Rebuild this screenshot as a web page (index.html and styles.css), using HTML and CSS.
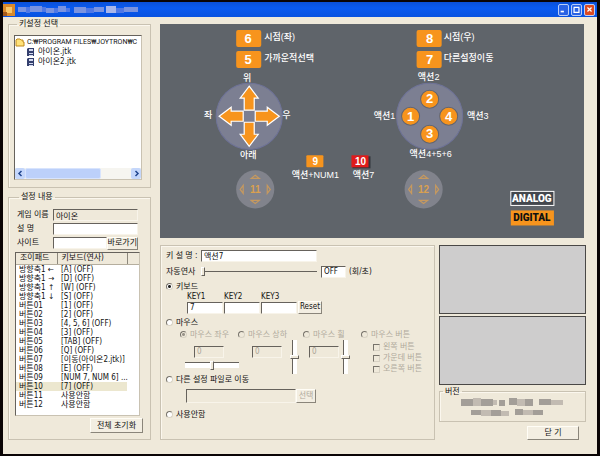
FILE: index.html
```
<!DOCTYPE html>
<html lang="ko">
  <head>
    <meta charset="UTF-8" />
    <meta name="viewport" content="width=device-width, initial-scale=1.0" />
    <title>키 설정</title>
    <link rel="stylesheet" href="styles.css">
  </head>
  <body>
    <div class="window">
      <header class="titlebar">
        <svg class="app-icon" width="12" height="12" viewBox="0 0 12 12">
          <rect width="12" height="12" fill="#d98a2b" />
          <rect x="3" y="3" width="6" height="6" fill="#f6c66a" />
          <rect y="8" width="4" height="4" fill="#a55a1c" />
        </svg>
        <svg class="title-mosaic" width="124" height="9" viewBox="0 0 124 9">
          <g fill="#7a93e0">
            <rect x="0" y="2" width="8" height="5" />
            <rect x="12" y="1" width="12" height="6" />
            <rect x="28" y="3" width="8" height="5" />
            <rect x="40" y="1" width="8" height="6" />
            <rect x="56" y="2" width="12" height="6" />
            <rect x="76" y="2" width="10" height="5" />
            <rect x="106" y="2" width="14" height="5" />
          </g>
          <g fill="#4f78e6">
            <rect x="8" y="2" width="4" height="6" />
            <rect x="24" y="2" width="4" height="5" />
            <rect x="36" y="3" width="4" height="5" />
            <rect x="48" y="3" width="4" height="4" />
            <rect x="68" y="3" width="8" height="5" />
            <rect x="98" y="3" width="8" height="5" />
          </g>
          <rect x="88" y="1" width="10" height="7" fill="#a9b6ea" />
        </svg>
        <div class="title-buttons">
          <button type="button" aria-label="최소화"><svg width="11" height="11" viewBox="0 0 11 11"><path d="M2 8h4" stroke="#fff" stroke-width="2" /></svg></button>
          <button type="button" aria-label="최대화"><svg width="11" height="11" viewBox="0 0 11 11"><path d="M2 3h7M2.500 3v6h6v-6" fill="none" stroke="#fff" stroke-width="1.500" /></svg></button>
          <button type="button" class="close" aria-label="닫기"><svg width="11" height="11" viewBox="0 0 11 11"><path d="M3 3l5 5M8 3l-5 5" stroke="#fff" stroke-width="1.500" /></svg></button>
        </div>
      </header>

      <main class="content">
        <div class="left">
          <fieldset class="group files">
            <legend>키설정 선택</legend>
            <div class="tree">
              <ul>
                <li class="folder">
                  <svg width="10" height="9" viewBox="0 0 10 9"><path d="M1 8V2l1-1h3l1 1h2v2h1v4z" fill="#ffe27a" stroke="#c08a1c" /></svg>
                  C:₩PROGRAM FILES₩JOYTRON₩C
                </li>
                <li class="file">
                  <svg width="9" height="9" viewBox="0 0 9 9"><path d="M1 1l1-1h6v8H1z" fill="#34406e" /><path d="M3 1h4v2H3zM3 5h4v1H3zM3 7h4v1H3z" fill="#d5daf0" /></svg>
                  아이온.jtk
                </li>
                <li class="file">
                  <svg width="9" height="9" viewBox="0 0 9 9"><path d="M1 1l1-1h6v8H1z" fill="#34406e" /><path d="M3 1h4v2H3zM3 5h4v1H3zM3 7h4v1H3z" fill="#d5daf0" /></svg>
                  아이온2.jtk
                </li>
              </ul>
              <div class="scrollbar">
                <button type="button" aria-label="왼쪽"><svg width="9" height="9" viewBox="0 0 9 9"><path d="M5.500 2L3 4.500L5.500 7" fill="none" stroke="#21468f" stroke-width="1.500" /></svg></button>
                <div class="thumb"></div>
                <button type="button" aria-label="오른쪽"><svg width="9" height="9" viewBox="0 0 9 9"><path d="M3.500 2L6 4.500L3.500 7" fill="none" stroke="#21468f" stroke-width="1.500" /></svg></button>
              </div>
            </div>
          </fieldset>

          <fieldset class="group details">
            <legend>설정 내용</legend>
            <div class="field">
              <label for="game">게임 이름</label>
              <input id="game" type="text" value="아이온" readonly />
            </div>
            <div class="field">
              <label for="desc">설 명</label>
              <input id="desc" type="text" />
            </div>
            <div class="field">
              <label for="site">사이트</label>
              <input id="site" type="text" />
              <button type="button" class="btn">바로가기</button>
            </div>
            <div class="list">
              <table>
                <thead>
                  <tr><th>조이패드</th><th>키보드(연사)</th><th></th></tr>
                </thead>
                <tbody>
                  <tr><td>방향축1 ←</td><td>[A] (OFF)</td><td></td></tr>
                  <tr><td>방향축1 →</td><td>[D] (OFF)</td><td></td></tr>
                  <tr><td>방향축1 ↑</td><td>[W] (OFF)</td><td></td></tr>
                  <tr><td>방향축1 ↓</td><td>[S] (OFF)</td><td></td></tr>
                  <tr><td>버튼01</td><td>[1] (OFF)</td><td></td></tr>
                  <tr><td>버튼02</td><td>[2] (OFF)</td><td></td></tr>
                  <tr><td>버튼03</td><td>[4, 5, 6] (OFF)</td><td></td></tr>
                  <tr><td>버튼04</td><td>[3] (OFF)</td><td></td></tr>
                  <tr><td>버튼05</td><td>[TAB] (OFF)</td><td></td></tr>
                  <tr><td>버튼06</td><td>[Q] (OFF)</td><td></td></tr>
                  <tr><td>버튼07</td><td>[이동(아이온2.jtk)]</td><td></td></tr>
                  <tr><td>버튼08</td><td>[E] (OFF)</td><td></td></tr>
                  <tr><td>버튼09</td><td>[NUM 7, NUM 6] ...</td><td></td></tr>
                  <tr class="selected"><td>버튼10</td><td>[7] (OFF)</td><td></td></tr>
                  <tr><td>버튼11</td><td>사용안함</td><td></td></tr>
                  <tr><td>버튼12</td><td>사용안함</td><td></td></tr>
                </tbody>
              </table>
            </div>
            <button type="button" class="btn reset-all">전체 초기화</button>
          </fieldset>
        </div>

        <div class="right">
          <svg class="pad" viewBox="0 0 423 213">
            <!-- shoulder buttons -->
            <g fill="#f7941d">
              <rect x="76" y="6" width="25" height="17" rx="2" />
              <rect x="76" y="27" width="25" height="17" rx="2" />
              <rect x="256" y="6" width="25" height="17" rx="2" />
              <rect x="256" y="27" width="25" height="17" rx="2" />
            </g>
            <g class="num">
              <text x="88" y="19">6</text>
              <text x="88" y="40">5</text>
              <text x="269" y="19">8</text>
              <text x="269" y="40">7</text>
            </g>
            <g class="caption">
              <text x="104" y="16">시점(좌)</text>
              <text x="104" y="37">가까운적선택</text>
              <text x="283" y="16">시점(우)</text>
              <text x="283" y="37">다른설정이동</text>
            </g>

            <!-- d-pad -->
            <circle cx="89" cy="92" r="33" fill="#7c7f92" stroke="#6f7398" />
            <g fill="#f7941d" stroke="#fff" stroke-width="1.200">
              <path id="arrow" d="M89 62l9 12h-4v12h-10v-12h-4z" />
              <use href="#arrow" transform="rotate(90 89 92)" />
              <use href="#arrow" transform="rotate(180 89 92)" />
              <use href="#arrow" transform="rotate(270 89 92)" />
            </g>
            <g class="caption mid">
              <text x="87" y="57">위</text>
              <text x="48" y="94">좌</text>
              <text x="126" y="94">우</text>
              <text x="88" y="134">아래</text>
            </g>

            <!-- action buttons -->
            <circle cx="269" cy="92" r="33" fill="#7c7f92" stroke="#6f7398" />
            <g fill="#f7941d" stroke="#5f6472" stroke-width="1">
              <circle cx="269" cy="75" r="9" />
              <circle cx="250" cy="92" r="9" />
              <circle cx="288" cy="92" r="9" />
              <circle cx="269" cy="110" r="9" />
            </g>
            <g class="num">
              <text x="269" y="79">2</text>
              <text x="250" y="97">1</text>
              <text x="288" y="97">4</text>
              <text x="269" y="114">3</text>
            </g>
            <g class="caption mid">
              <text x="268" y="56">액션2</text>
              <text x="224" y="95">액션1</text>
              <text x="317" y="95">액션3</text>
              <text x="270" y="133">액션4+5+6</text>
              <text x="155" y="154">액션+NUM1</text>
              <text x="203" y="154">액션7</text>
            </g>

            <!-- start / select -->
            <rect x="146" y="131" width="17" height="12" rx="1" fill="#f7941d" />
            <rect x="192" y="132" width="18" height="12" fill="#33363c" />
            <rect x="191" y="131" width="17" height="12" fill="#e01b1b" />
            <g class="num small">
              <text x="155" y="141">9</text>
              <text x="200" y="141">10</text>
            </g>

            <!-- analog sticks -->
            <g id="stick">
              <circle cx="95" cy="165" r="19" fill="#81838c" />
              <path d="M91 154l4-3 4 3zM91 176l4 3 4-3zM83 161l-3 4 3 4zM107 161l3 4-3 4z" fill="none" stroke="#c6995f" stroke-width="1.200" />
            </g>
            <use href="#stick" x="168" />
            <g class="stick-num">
              <text x="95" y="169">11</text>
              <text x="263" y="169">12</text>
            </g>

            <rect x="350" y="167" width="43" height="14" fill="#43474d" stroke="#fff" />
            <rect x="350" y="186" width="43" height="15" fill="#f7941d" />
            <g class="mode">
              <text x="371" y="178" fill="#fff">ANALOG</text>
              <text x="371" y="197" fill="#111">DIGITAL</text>
            </g>
          </svg>

          <div class="lower">
            <form class="group key-form">
              <div class="row">
                <label class="row-label" for="keyname">키 설 명 :</label>
                <input id="keyname" class="wide" type="text" value="액션7" />
              </div>
              <div class="row">
                <label class="row-label" for="rapid">자동연사</label>
                <input id="rapid" class="wide" type="range" min="0" max="30" value="0" />
                <input class="off" type="text" value="OFF" aria-label="연사 속도" />
                <span>(회/초)</span>
              </div>

              <label class="option"><input type="radio" name="mode" checked />키보드</label>
              <div class="keys">
                <label>KEY1<input type="text" value="7" /></label>
                <label>KEY2<input type="text" /></label>
                <label>KEY3<input type="text" /></label>
                <button type="button" class="btn">Reset</button>
              </div>

              <label class="option"><input type="radio" name="mode" />마우스</label>
              <div class="mouse">
                <div>
                  <label class="option"><input type="radio" name="mouse" checked disabled />마우스 좌우</label>
                  <input class="amount" type="text" value="0" disabled aria-label="좌우 값" />
                  <input class="across" type="range" disabled aria-label="좌우" />
                </div>
                <div>
                  <label class="option"><input type="radio" name="mouse" disabled />마우스 상하</label>
                  <div class="pair">
                    <input class="amount" type="text" value="0" disabled aria-label="상하 값" />
                    <input class="updown" type="range" disabled aria-label="상하" />
                  </div>
                </div>
                <div>
                  <label class="option"><input type="radio" name="mouse" disabled />마우스 휠</label>
                  <div class="pair">
                    <input class="amount" type="text" value="0" disabled aria-label="휠 값" />
                    <input class="updown" type="range" disabled aria-label="휠" />
                  </div>
                </div>
                <div>
                  <label class="option"><input type="radio" name="mouse" disabled />마우스 버튼</label>
                  <label class="check"><input type="checkbox" disabled />왼쪽 버튼</label>
                  <label class="check"><input type="checkbox" disabled />가운데 버튼</label>
                  <label class="check"><input type="checkbox" disabled />오른쪽 버튼</label>
                </div>
              </div>

              <label class="option"><input type="radio" name="mode" />다른 설정 파일로 이동</label>
              <div class="move">
                <input type="text" disabled aria-label="설정 파일" />
                <button type="button" class="btn" disabled>선택</button>
              </div>
              <label class="option"><input type="radio" name="mode" />사용안함</label>
            </form>

            <div class="side">
              <div class="banner"></div>
              <div class="banner"></div>
              <fieldset class="group version">
                <legend>버전</legend>
                <svg width="104" height="20" viewBox="0 0 104 20">
                  <g fill="#a39e98">
                    <rect x="0" y="2" width="12" height="7" />
                    <rect x="20" y="2" width="12" height="7" />
                    <rect x="38" y="3" width="6" height="6" />
                    <rect x="48" y="1" width="8" height="7" />
                    <rect x="64" y="2" width="8" height="7" />
                    <rect x="78" y="2" width="12" height="6" />
                    <rect x="10" y="13" width="10" height="5" />
                    <rect x="30" y="13" width="10" height="6" />
                    <rect x="54" y="12" width="8" height="6" />
                    <rect x="72" y="13" width="10" height="5" />
                  </g>
                  <g fill="#c2bbb2">
                    <rect x="12" y="1" width="8" height="8" />
                    <rect x="32" y="3" width="4" height="5" />
                    <rect x="56" y="2" width="8" height="7" />
                    <rect x="90" y="3" width="12" height="5" />
                    <rect x="20" y="13" width="10" height="6" />
                    <rect x="40" y="14" width="8" height="5" />
                    <rect x="62" y="13" width="10" height="5" />
                  </g>
                </svg>
              </fieldset>
              <button type="button" class="btn close-btn">닫 기</button>
            </div>
          </div>
        </div>
      </main>
    </div>
  </body>
</html>
```
FILE: styles.css
```
:root {
  --face: #efe9da;
  --line: #c9c2b2;
  --dark: #66625c;
}

* {
  box-sizing: border-box;
}

body {
  margin: 0;
  min-height: 100vh;
  padding: 2px 3px;
  background: #0a0405;
  display: flex;
  font: 8px/10px "DejaVu Sans Condensed", "Noto Sans CJK KR", sans-serif;
  color: #111;
}

input,
button {
  font: inherit;
  color: inherit;
  margin: 0;
  padding: 0;
}

.window {
  flex: 1;
  background: var(--face);
}

/* title bar */
.titlebar {
  height: 15px;
  display: flex;
  align-items: center;
  gap: 3px;
  background: linear-gradient(#0a50d8, #0a5af0 40%, #0852e0);
}

.title-buttons {
  margin-left: auto;
  display: flex;
  gap: 2px;
  padding-right: 2px;
}

.title-buttons button {
  width: 11px;
  height: 12px;
  border: 1px solid #b9cdf8;
  border-radius: 2px;
  background: #2a62e4;
  display: flex;
  align-items: center;
  justify-content: center;
}

.title-buttons .close {
  background: #dc4a22;
}

.content {
  display: grid;
  grid-template-columns: 143px 1fr;
  gap: 9px;
  padding: 7px 11px 14px 5px;
}

/* group boxes */
.group {
  margin: 0;
  padding: 0;
  min-width: 0;
  border: 1px solid var(--line);
  box-shadow: inset 1px 1px 0 #fbf7ee;
}

legend {
  margin-left: 3px;
  padding: 0 2px;
}

.left {
  display: flex;
  flex-direction: column;
  gap: 4px;
  margin-top: -5px;
}

.files {
  padding: 6px 8px 7px 5px;
}

.tree {
  height: 145px;
  display: flex;
  flex-direction: column;
  background: #fff;
  border: 1px solid var(--line);
  border-top-color: var(--dark);
  border-left-color: var(--dark);
  overflow: hidden;
}

.tree ul {
  flex: 1;
  margin: 0;
  padding: 1px 0;
  list-style: none;
}

.tree li {
  display: flex;
  align-items: center;
  gap: 2px;
  height: 10px;
  white-space: nowrap;
}

.tree svg {
  flex: none;
}

.tree .folder {
  font-family: Roboto, "Noto Sans CJK KR", sans-serif;
  font-size: 7px;
}

.tree .file {
  padding-left: 11px;
  gap: 3px;
}

.scrollbar {
  display: flex;
  height: 11px;
  background: #f6f5f0;
}

.scrollbar button {
  width: 10px;
  border: 0;
  border-radius: 2px;
  background: #c5d7fb;
  display: flex;
  align-items: center;
  justify-content: center;
}

.scrollbar .thumb {
  width: 60%;
  margin-right: auto;
  background: #bcd0fa;
  border: 1px solid #d8e4fd;
  border-radius: 2px;
}

.details {
  flex: 1;
  padding: 7px 7px 4px;
}

.field {
  display: flex;
  align-items: center;
  height: 12px;
  margin-bottom: 2px;
  padding-right: 5px;
}

.field label {
  width: 37px;
  padding-left: 1px;
  flex: none;
}

input[type="text"] {
  min-width: 0;
  height: 12px;
  padding-left: 2px;
  background: #fff;
  border: 1px solid #f8f4ea;
  border-top-color: var(--dark);
  border-left-color: var(--dark);
  border-radius: 0;
}

.field input {
  flex: 1;
}

.field input[readonly] {
  background: var(--face);
}

.btn {
  height: 13px;
  background: #f3eee2;
  border: 1px solid #fffdf6;
  border-right-color: #8a857a;
  border-bottom-color: #8a857a;
  white-space: nowrap;
}

.list {
  height: 164px;
  margin: 3px 3px 0 -1px;
  background: #fff;
  border: 1px solid var(--line);
  border-top-color: var(--dark);
  border-left-color: var(--dark);
}

table {
  width: 100%;
  table-layout: fixed;
  border-collapse: collapse;
}

th {
  height: 11px;
  padding: 0 0 0 4px;
  font-weight: normal;
  text-align: left;
  background: var(--face);
  border-right: 1px solid #8d887c;
  border-bottom: 1px solid #b5ae9e;
}

th:nth-child(1) {
  width: 41px;
}

th:nth-child(3) {
  width: 12px;
  border-right: 0;
}

td {
  height: 9px;
  padding: 0 0 0 3px;
  line-height: 9px;
  white-space: nowrap;
}

td:nth-child(2) {
  padding-left: 4px;
}

.selected td:not(:last-child) {
  background: #ece7cf;
}

.reset-all {
  display: block;
  width: 53px;
  height: 15px;
  margin: 2px 0 0 auto;
}

/* gamepad */
.right {
  min-width: 0;
  display: flex;
  flex-direction: column;
  gap: 7px;
}

.pad {
  display: block;
  width: calc(100% - 2px);
  background: #5f646a;
}

.pad text {
  font-family: "Liberation Sans", "Noto Sans CJK KR", sans-serif;
}

.num text {
  font-size: 13px;
  font-weight: bold;
  fill: #fff;
  text-anchor: middle;
}

.num.small text {
  font-size: 10px;
}

.caption text {
  font-size: 9px;
  font-weight: 500;
  fill: #fff;
}

.caption.mid text {
  text-anchor: middle;
}

.stick-num text {
  font-size: 10px;
  font-weight: bold;
  fill: #d9a050;
  text-anchor: middle;
}

.pad .mode text {
  font-family: Roboto, sans-serif;
  font-size: 10px;
  font-weight: 900;
  text-anchor: middle;
}

/* key settings */
.lower {
  flex: 1;
  display: grid;
  grid-template-columns: 1fr 147px;
  gap: 4px;
}

.key-form {
  padding: 4px 5px;
}

.row {
  display: flex;
  align-items: center;
  height: 12px;
  margin-bottom: 4px;
}

.row-label {
  width: 35px;
}

.wide {
  width: 116px;
}

.off {
  width: 25px;
  margin: 0 3px 0 4px;
}

.option,
.check {
  display: flex;
  align-items: center;
  gap: 3px;
  height: 10px;
  white-space: nowrap;
}

input[type="radio"],
input[type="checkbox"] {
  appearance: none;
  flex: none;
  width: 7px;
  height: 7px;
  background: #fff;
  border: 1px solid #d8d2c4;
  border-top-color: #77736b;
  border-left-color: #77736b;
}

input[type="radio"] {
  border-radius: 50%;
}

input[type="radio"]:checked {
  background: radial-gradient(#222 0 1px, #fff 2px);
}

input:disabled {
  color: #aaa496;
}

input[type="radio"]:disabled,
input[type="checkbox"]:disabled,
input[type="text"]:disabled {
  background: var(--face);
}

input[type="radio"]:checked:disabled {
  background: radial-gradient(#99948a 0 1px, var(--face) 2px);
}

input[type="range"] {
  appearance: none;
  height: 9px;
  background: linear-gradient(var(--dark), var(--dark)) center / 100% 1px no-repeat;
}

input[type="range"]::-webkit-slider-thumb {
  appearance: none;
  width: 4px;
  height: 9px;
  background: var(--face);
  border: 1px solid #fff;
  border-right-color: var(--dark);
  border-bottom-color: var(--dark);
}

.keys {
  display: flex;
  align-items: flex-end;
  gap: 1px;
  margin-left: 21px;
}

.keys label {
  display: flex;
  flex-direction: column;
  width: 36px;
}

.keys .btn {
  width: 24px;
}

.keys + .option {
  margin: 4px 0 2px;
}

.mouse {
  display: grid;
  grid-template-columns: 58px 65px 58px 1fr;
  margin-left: 14px;
  color: #b0aa9c;
}

.mouse .amount {
  width: 30px;
  margin: 6px 0 0 14px;
}

.mouse .across {
  display: block;
  width: 54px;
  margin: 3px 0 0 5px;
  background: linear-gradient(var(--dark) 1px, #fff 1px) center / 100% 6px no-repeat;
}

.pair {
  display: flex;
  align-items: flex-start;
  gap: 8px;
}

.mouse input.updown {
  writing-mode: vertical-lr;
  width: 9px;
  height: 34px;
  background: linear-gradient(to right, var(--dark) 1px, #fff 1px) center / 5px 100% no-repeat;
}

.mouse input.updown::-webkit-slider-thumb {
  width: 9px;
  height: 4px;
}

.mouse .pair .amount {
  flex: none;
}

.mouse div:nth-child(3) .pair {
  gap: 2px;
  margin-left: -8px;
}

.check {
  height: 11px;
  margin-left: 12px;
}

.mouse .check:nth-child(2) {
  margin-top: 2px;
}

.move {
  display: flex;
  height: 14px;
  margin: 4px 0 7px 20px;
}

.move input {
  width: 110px;
  height: 14px;
}

.move .btn {
  width: 20px;
  height: 14px;
  color: #b0aa9c;
}

/* right side */
.side {
  display: flex;
  flex-direction: column;
}

.banner {
  height: 69px;
  margin-bottom: 2px;
  background: #cecdcd;
  border: 1px solid #4a4846;
}

.version {
  height: 35px;
  text-align: center;
}

.version legend {
  text-align: left;
}

.close-btn {
  width: 52px;
  height: 14px;
  margin: 4px 7px 0 auto;
}
```
